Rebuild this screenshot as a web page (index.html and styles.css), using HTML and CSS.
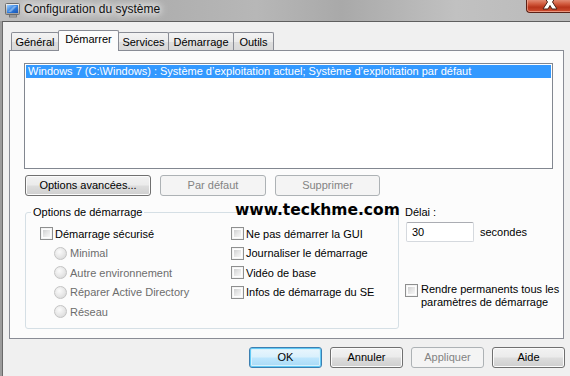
FILE: index.html
```html
<!DOCTYPE html>
<html lang="fr">
<head>
<meta charset="utf-8">
<title>Configuration du système</title>
<link rel="stylesheet" href="styles.css">
</head>
<body>
<div class="window">
  <div class="titlebar">
    <svg class="app-icon" width="16" height="16" viewBox="0 0 16 16">
      <defs>
        <linearGradient id="scr" x1="0" y1="0" x2="1" y2="1">
          <stop offset="0" stop-color="#9fd0ff"/>
          <stop offset="0.5" stop-color="#2f7fe0"/>
          <stop offset="1" stop-color="#1450b0"/>
        </linearGradient>
        <linearGradient id="frm" x1="0" y1="0" x2="0" y2="1">
          <stop offset="0" stop-color="#f4f4f4"/>
          <stop offset="1" stop-color="#9a9a9a"/>
        </linearGradient>
      </defs>
      <rect x="0.5" y="1.5" width="14" height="11" rx="1" fill="url(#frm)" stroke="#6c6c6c"/>
      <rect x="2" y="3" width="11" height="8" fill="url(#scr)"/>
      <path d="M3 10 L9 4 L12 4 L6 10 Z" fill="#ffffff" opacity="0.35"/>
      <rect x="4.5" y="13" width="7" height="2" fill="#b8b8b8" stroke="#6c6c6c" stroke-width="0.8"/>
    </svg>
    <span class="title">Configuration du système</span>
    <div class="close-btn">
      <svg width="18" height="12" viewBox="0 0 18 12">
        <path d="M2 -5 L7 -5 L9 -1.5 L11 -5 L16 -5 L11.5 2 L16 9 L11 9 L9 5.5 L7 9 L2 9 L6.5 2 Z" fill="#ffffff" stroke="#4a2018" stroke-width="1"/>
      </svg>
    </div>
  </div>
  <div class="frame">
    <div class="client">
      <div class="tabs">
        <div class="tab t-general">Général</div>
        <div class="tab t-demarrer active">Démarrer</div>
        <div class="tab t-services">Services</div>
        <div class="tab t-demarrage">Démarrage</div>
        <div class="tab t-outils">Outils</div>
      </div>
      <div class="panel">
        <div class="listbox">
          <div class="list-item selected">Windows 7 (C:\Windows) : Système d’exploitation actuel; Système d’exploitation par défaut</div>
        </div>
        <div class="btn-row">
          <div class="btn w-adv">Options avancées...</div>
          <div class="btn w-def disabled">Par défaut</div>
          <div class="btn w-del disabled">Supprimer</div>
        </div>
        <div class="lower">
          <fieldset class="group">
            <legend>Options de démarrage</legend>
            <div class="group-grid">
              <div class="col">
                <div class="opt"><span class="check"></span>Démarrage sécurisé</div>
                <div class="opt sub disabled"><span class="radio"></span>Minimal</div>
                <div class="opt sub disabled"><span class="radio"></span>Autre environnement</div>
                <div class="opt sub disabled"><span class="radio"></span>Réparer Active Directory</div>
                <div class="opt sub disabled"><span class="radio"></span>Réseau</div>
              </div>
              <div class="col">
                <div class="opt"><span class="check"></span>Ne pas démarrer la GUI</div>
                <div class="opt"><span class="check"></span>Journaliser le démarrage</div>
                <div class="opt"><span class="check"></span>Vidéo de base</div>
                <div class="opt"><span class="check"></span>Infos de démarrage du SE</div>
              </div>
            </div>
          </fieldset>
          <div class="side">
            <div class="delay-label">Délai :</div>
            <div class="delay-row">
              <div class="textbox">30</div>
              <span class="unit">secondes</span>
            </div>
            <div class="perm"><span class="check"></span><span class="perm-text">Rendre permanents tous les paramètres de démarrage</span></div>
          </div>
        </div>
      </div>
      <div class="dialog-buttons">
        <div class="btn default">OK</div>
        <div class="btn">Annuler</div>
        <div class="btn disabled">Appliquer</div>
        <div class="btn">Aide</div>
      </div>
    </div>
  </div>
  <div class="watermark">www.teckhme.com</div>
</div>
</body>
</html>
```

FILE: styles.css
```css
* { box-sizing: border-box; }
html, body { margin: 0; padding: 0; }
body {
  width: 570px;
  height: 376px;
  overflow: hidden;
  font-family: "Liberation Sans", Arial, sans-serif;
  font-size: 11px;
  color: #000;
  background: #f0f0f0;
}
.window {
  position: relative;
  width: 570px;
  height: 376px;
  display: flex;
  flex-direction: column;
  overflow: hidden;
}
.titlebar {
  height: 21px;
  flex: none;
  display: flex;
  align-items: flex-start;
  background: linear-gradient(90deg, #bdbdbd 0%, #adadad 25%, #b7b7b7 45%, #a9a9a9 60%, #c1c1c1 80%, #bababa 100%);
}
.app-icon { margin: 2px 0 0 5px; flex: none; }
.title {
  margin-left: 3px;
  padding-top: 2px;
  font-size: 12px;
  line-height: 14px;
  color: #111;
  text-shadow: 0 0 6px #fff, 0 0 10px #fff, 0 0 12px rgba(255,255,255,.9);
}
.close-btn {
  margin-left: auto;
  width: 44px;
  height: 13px;
  border: 1px solid #5c2116;
  border-top: none;
  border-right: none;
  border-bottom-left-radius: 4px;
  background: linear-gradient(#e28a73 0%, #d0573b 35%, #b8341b 60%, #cf4f31 100%);
  box-shadow: inset 0 -1px 0 rgba(255,200,180,.6), inset 1px 0 0 rgba(255,200,180,.5);
  display: flex;
  justify-content: center;
  overflow: hidden;
}
.close-btn svg { margin-left: 2px; }
.frame {
  flex: 1;
  display: flex;
  padding-left: 2px;
  background: linear-gradient(90deg, #9c9c9c, #b0b0b0);
}
.client {
  flex: 1;
  background: #f0f0f0;
  border-top: 1px solid #5f5f5f;
  border-left: 1px solid #6a6a6a;
  display: flex;
  flex-direction: column;
}
.tabs {
  display: flex;
  align-items: flex-end;
  height: 21px;
  margin: 8px 0 -1px 8px;
}
.tab {
  height: 18px;
  margin-bottom: 1px;
  margin-left: -1px;
  border: 1px solid #898c95;
  border-bottom: none;
  border-radius: 2px 2px 0 0;
  background: linear-gradient(#f3f3f3 0%, #ebebeb 50%, #dedede 51%, #d8d8d8 100%);
  display: flex;
  align-items: center;
  justify-content: center;
  line-height: 13px;
  padding-top: 1px;
}
.tab.t-general { margin-left: 0; width: 48px; }
.tab.t-demarrer { width: 61px; }
.tab.t-services { width: 51px; }
.tab.t-demarrage { width: 66px; }
.tab.t-outils { width: 41px; }
.tab.active {
  position: relative;
  z-index: 1;
  height: 21px;
  margin-bottom: 0;
  background: #fcfcfc;
  padding-top: 0;
  padding-bottom: 3px;
}
.panel {
  width: 555px;
  height: 289px;
  margin-left: 6px;
  border: 1px solid #898c95;
  background: #fcfcfc;
  padding: 12px 10px 0 14px;
}
.listbox {
  width: 529px;
  height: 106px;
  border: 1px solid #828790;
  background: #fff;
  padding: 1px;
}
.list-item {
  height: 13px;
  line-height: 13px;
  padding-left: 2px;
  white-space: nowrap;
}
.list-item.selected { background: #3399ff; color: #fff; }
.btn-row {
  display: flex;
  gap: 9px;
  margin: 6px 0 0 1px;
}
.btn {
  flex: none;
  height: 21px;
  display: flex;
  align-items: center;
  justify-content: center;
  line-height: 13px;
  color: #000;
  border: 1px solid #707070;
  border-radius: 3px;
  background: linear-gradient(#f2f2f2 0%, #ebebeb 48%, #dddddd 52%, #cfcfcf 100%);
  box-shadow: inset 0 0 0 1px #fbfbfb;
}
.btn.disabled {
  border-color: #adb2b5;
  background: #f4f4f4;
  color: #838383;
  box-shadow: none;
}
.btn.default {
  border-color: #3c7fb1;
  box-shadow: inset 0 0 0 1px #62c9f5, inset 0 0 0 2px #d8f1fb;
  background: linear-gradient(#eaf6fd 0%, #d9f0fc 48%, #bee6fd 52%, #a7d9f5 100%);
}
.w-adv { width: 126px; }
.w-def { width: 106px; }
.w-del { width: 105px; }
.lower {
  display: flex;
  align-items: flex-start;
  margin-top: 10px;
}
.group {
  flex: none;
  width: 374px;
  height: 123px;
  margin: 0 0 0 1px;
  padding: 5px 0 0 14px;
  border: 1px solid #d5dfe5;
  border-radius: 3px;
  min-width: 0;
}
.group legend {
  padding: 0 2px;
  margin-left: -9px;
  line-height: 13px;
}
.group-grid {
  display: grid;
  grid-template-columns: 191px auto;
}
.col { display: flex; flex-direction: column; }
.opt {
  height: 19.5px;
  display: flex;
  align-items: center;
  white-space: nowrap;
}
.opt.sub { padding-left: 14px; }
.opt.disabled { color: #6d6d6d; }
.check {
  flex: none;
  width: 13px;
  height: 13px;
  margin-right: 2px;
  border: 1px solid #8e8f8f;
  padding: 2px;
  background: linear-gradient(135deg, #cfd0d1 0%, #e6e6e6 50%, #f7f7f7 100%) content-box, #fdfdfd;
  box-shadow: inset 0 0 0 1px #f4f4f4;
}
.radio {
  flex: none;
  width: 13px;
  height: 13px;
  margin-right: 3px;
  border-radius: 50%;
  border: 1px solid #c4c4c4;
  background: radial-gradient(circle at 40% 35%, #fbfbfb 0%, #e6e6e6 55%, #d2d2d2 100%);
}
.side {
  flex: none;
  margin-left: 6px;
  width: 160px;
  display: flex;
  flex-direction: column;
}
.delay-label { line-height: 13px; }
.delay-row {
  display: flex;
  align-items: center;
  margin-top: 3px;
  margin-left: 1px;
}
.textbox {
  width: 68px;
  height: 20px;
  border: 1px solid #d5d9de;
  border-top-color: #abadb3;
  border-radius: 2px;
  background: #fff;
  padding-left: 5px;
  line-height: 18px;
}
.unit { margin-left: 6px; }
.perm {
  display: flex;
  align-items: flex-start;
  margin-top: 42px;
}
.perm .check { margin-right: 3px; }
.perm-text { line-height: 12.5px; margin-top: -1px; }
.dialog-buttons {
  display: flex;
  justify-content: flex-end;
  gap: 8px;
  margin-top: 8px;
  padding-right: 5px;
}
.dialog-buttons .btn { width: 73px; }
.watermark {
  position: absolute;
  left: 235px;
  top: 200px;
  font-family: "DejaVu Sans", Verdana, sans-serif;
  font-weight: bold;
  font-size: 15.5px;
  line-height: 20px;
  color: #000;
}
```
